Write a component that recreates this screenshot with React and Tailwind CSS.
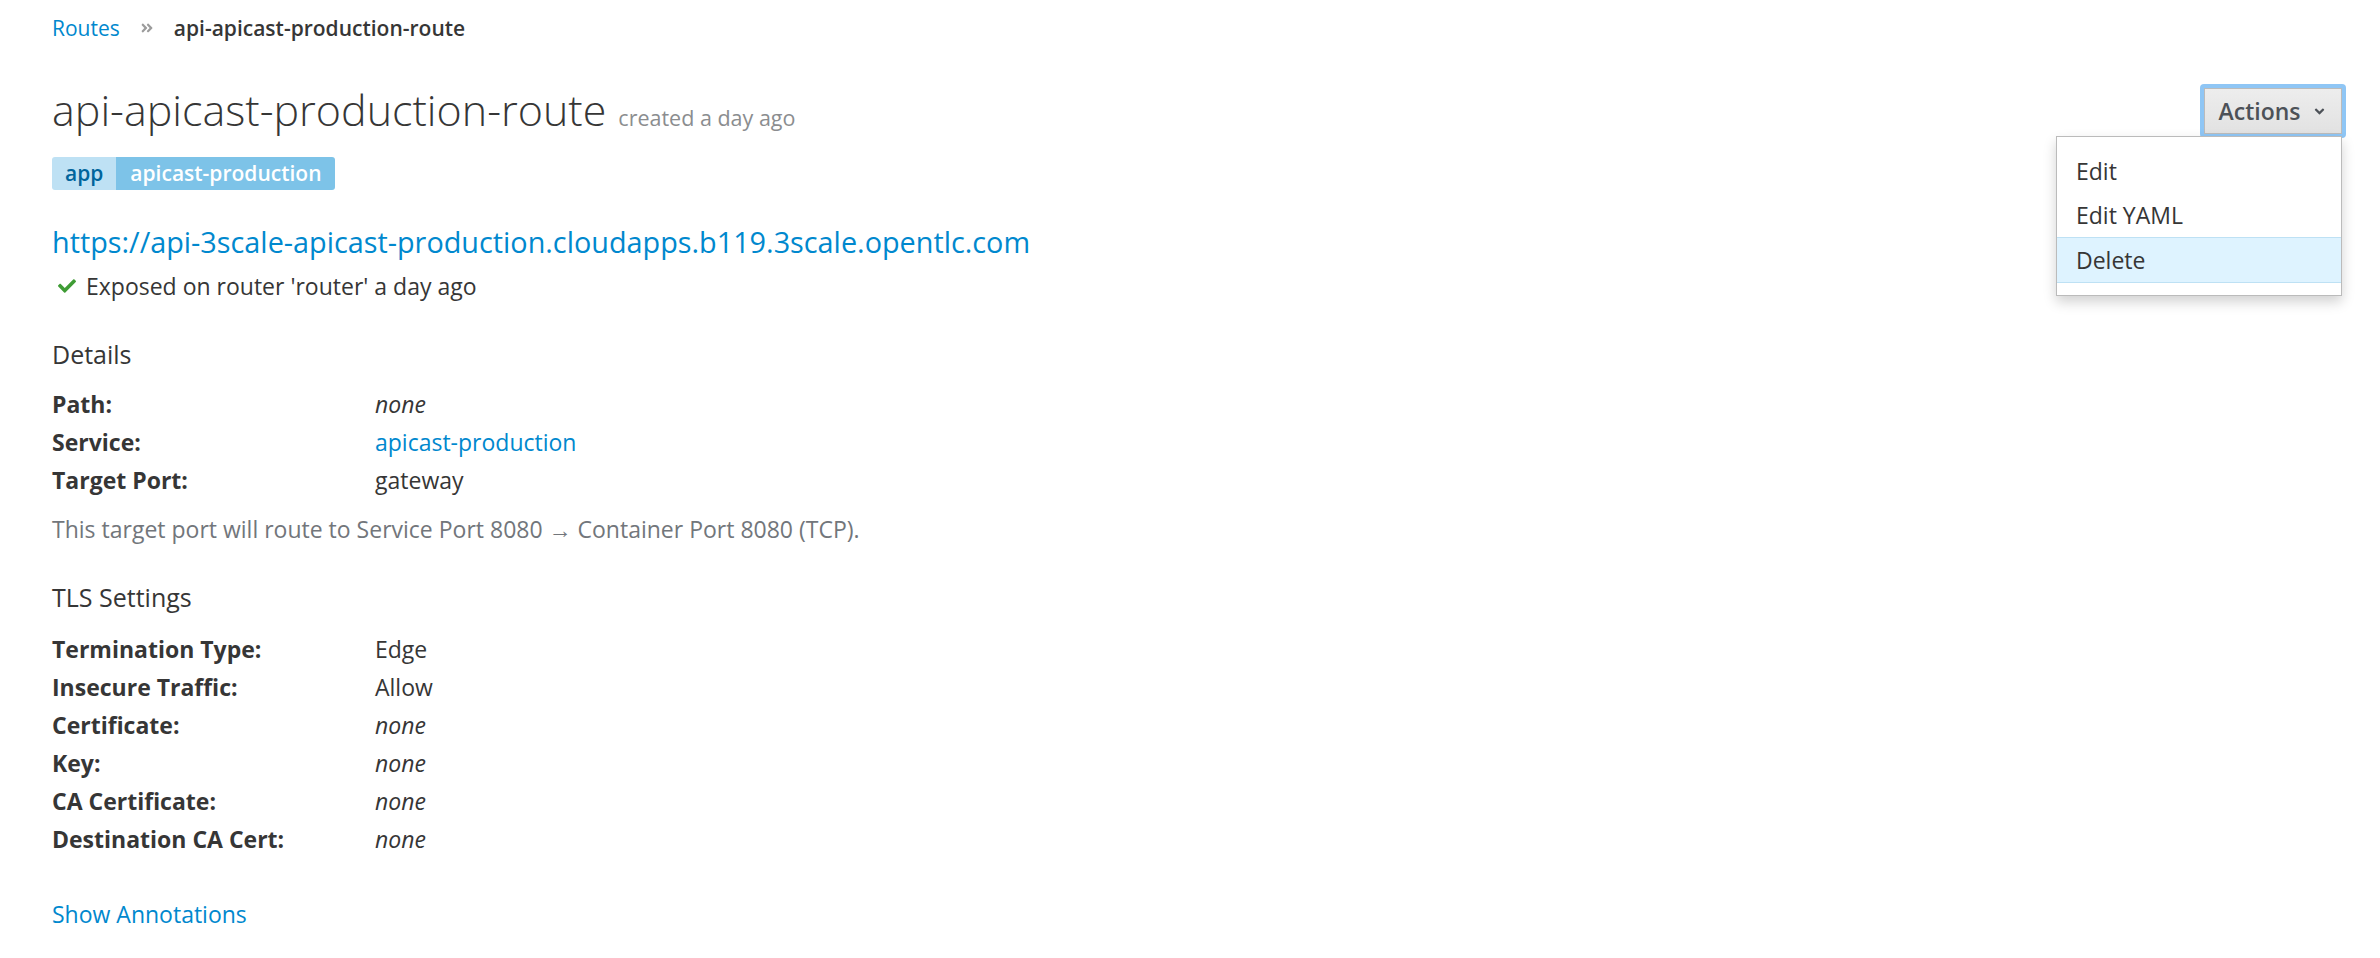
import React from 'react';
import { FaCheck, FaAngleDoubleRight, FaAngleDown } from 'react-icons/fa';

const details = [
  { label: 'Path:', value: 'none', kind: 'none' },
  { label: 'Service:', value: 'apicast-production', kind: 'link' },
  { label: 'Target Port:', value: 'gateway' },
];

const tls = [
  { label: 'Termination Type:', value: 'Edge' },
  { label: 'Insecure Traffic:', value: 'Allow' },
  { label: 'Certificate:', value: 'none', kind: 'none' },
  { label: 'Key:', value: 'none', kind: 'none' },
  { label: 'CA Certificate:', value: 'none', kind: 'none' },
  { label: 'Destination CA Cert:', value: 'none', kind: 'none' },
];

const DetailRows = ({ rows, className = '' }) => (
  <dl className={`grid grid-cols-[323px_1fr] text-[23px] leading-[38px] ${className}`}>
    {rows.map((row) => (
      <React.Fragment key={row.label}>
        <dt className="font-bold text-[#363636]">{row.label}</dt>
        <dd
          className={
            row.kind === 'link'
              ? 'text-[#0088ce]'
              : row.kind === 'none'
              ? 'italic text-[#363636]'
              : 'text-[#363636]'
          }
        >
          {row.value}
        </dd>
      </React.Fragment>
    ))}
  </dl>
);

const ActionsMenu = () => (
  <div className="relative mt-[88px]">
    <div className="-m-[4px] rounded-[4px] bg-[#8fc6f5] p-[4px]">
      <button className="flex h-[46px] w-[138px] items-center justify-center gap-[12px] border border-[#bbbbbb] bg-gradient-to-b from-[#ededed] to-[#e2e2e2] text-[23px] font-semibold text-[#4d5258]">
        Actions
        <FaAngleDown className="h-[15px] w-[15px] text-[#4d5258]" />
      </button>
    </div>
    <div className="absolute right-0 top-[48px] w-[286px] border border-[#bbbbbb] bg-white py-[12px] shadow-[0_6px_12px_rgba(0,0,0,0.18)]">
      <div className="px-[19px] text-[23px] leading-[44px] text-[#363636]">Edit</div>
      <div className="px-[19px] text-[23px] leading-[44px] text-[#363636]">Edit YAML</div>
      <div className="border-y border-[#bee1f4] bg-[#def3ff] px-[19px] text-[23px] leading-[44px] text-[#363636]">
        Delete
      </div>
    </div>
  </div>
);

export default function App() {
  return (
    <div className="min-h-[958px] bg-white pl-[52px] pr-[38px] font-['Open_Sans',sans-serif] text-[#363636]">
      <div className="flex items-start justify-between">
        <div>
          {/* Breadcrumb */}
          <div className="flex items-center pt-[10px] text-[21px] leading-[36px]">
            <a className="text-[#0088ce]">Routes</a>
            <FaAngleDoubleRight className="mx-[20px] h-[14px] w-[14px] text-[#9c9c9c]" />
            <span className="font-semibold text-[#363636]">api-apicast-production-route</span>
          </div>

          {/* Title */}
          <h1 className="mt-[39px] flex items-baseline text-[43px] font-light leading-[50px] text-[#363636]">
            api-apicast-production-route
            <small className="ml-[12px] text-[21.5px] font-normal text-[#8b8d8f]">created a day ago</small>
          </h1>

          {/* Labels */}
          <div className="mt-[14px] flex h-[33px] w-fit overflow-hidden rounded-[3px] text-[21px] font-semibold leading-[33px]">
            <span className="bg-[#bee1f4] px-[13px] text-[#00659c]">app</span>
            <span className="bg-[#7dc3e8] px-[14px] text-white">apicast-production</span>
          </div>
        </div>

        <ActionsMenu />
      </div>

      <a className="mt-[32px] block text-[28.8px] leading-[40px] text-[#0088ce]">
        https://api-3scale-apicast-production.cloudapps.b119.3scale.opentlc.com
      </a>

      <div className="mt-[5px] flex items-center text-[23px] leading-[38px]">
        <FaCheck className="ml-[6px] mr-[10px] h-[18px] w-[18px] text-[#3f9c35]" />
        Exposed on router 'router' a day ago
      </div>

      <h3 className="mt-[29px] text-[25px] leading-[40px] text-[#363636]">Details</h3>
      <DetailRows rows={details} className="mt-[11px]" />
      <p className="mt-[11px] text-[23px] leading-[38px] text-[#72767b]">
        This target port will route to Service Port 8080 → Container Port 8080 (TCP).
      </p>

      <h3 className="mt-[29px] text-[25px] leading-[40px] text-[#363636]">TLS Settings</h3>
      <DetailRows rows={tls} className="mt-[13px]" />

      <a className="mt-[37px] block text-[23px] leading-[38px] text-[#0088ce]">Show Annotations</a>
    </div>
  );
}
